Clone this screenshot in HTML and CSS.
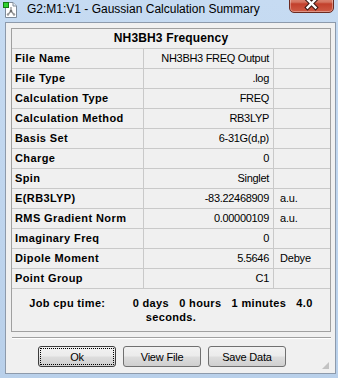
FILE: index.html
```html
<!DOCTYPE html>
<html lang="en">
<head>
  <meta charset="UTF-8" />
  <title>G2:M1:V1 - Gaussian Calculation Summary</title>
  <link rel="stylesheet" href="styles.css">
</head>
<body>
  <div class="window">
    <div class="titlebar">
      <svg class="app-icon" width="14" height="16" viewBox="0 0 14 16">
        <path d="M2.5 0.5 H10 L13.5 4 V15.5 H2.5 Z" fill="#fff" stroke="#7d8a99"/>
        <path d="M10 0.5 V4 H13.5" fill="#e8ecf1" stroke="#7d8a99"/>
        <path d="M8 5 V9 M8 9 L5 12.5 M8 9 L11 12.5" stroke="#8a8a8a" stroke-width="1.2" fill="none"/>
        <circle cx="8" cy="9" r="1.3" fill="#707070"/>
        <circle cx="5" cy="12.5" r="1.2" fill="#9a9a9a"/>
        <circle cx="11" cy="12.5" r="1.2" fill="#9a9a9a"/>
        <rect x="0.5" y="0.5" width="5" height="5" fill="#2fd12f" stroke="#137a13"/>
      </svg>
      <span class="title">G2:M1:V1 - Gaussian Calculation Summary</span>
      <div class="close">
        <svg width="45" height="20" viewBox="0 0 45 20">
          <path d="M18.5 -0.5 L26.5 7.5 M26.5 -0.5 L18.5 7.5" stroke="#3b1a14" stroke-width="4.5" stroke-linecap="square"/>
          <path d="M18.5 -0.5 L26.5 7.5 M26.5 -0.5 L18.5 7.5" stroke="#fff" stroke-width="2.4" stroke-linecap="square"/>
        </svg>
      </div>
    </div>

    <div class="client">
      <div class="summary">
        <div class="grid">
          <div class="head">NH3BH3 Frequency</div>

          <div class="label">File Name</div><div class="value">NH3BH3 FREQ Output</div><div class="unit"></div>
          <div class="label">File Type</div><div class="value">.log</div><div class="unit"></div>
          <div class="label">Calculation Type</div><div class="value">FREQ</div><div class="unit"></div>
          <div class="label">Calculation Method</div><div class="value">RB3LYP</div><div class="unit"></div>
          <div class="label">Basis Set</div><div class="value">6-31G(d,p)</div><div class="unit"></div>
          <div class="label">Charge</div><div class="value">0</div><div class="unit"></div>
          <div class="label">Spin</div><div class="value">Singlet</div><div class="unit"></div>
          <div class="label">E(RB3LYP)</div><div class="value">-83.22468909</div><div class="unit">a.u.</div>
          <div class="label">RMS Gradient Norm</div><div class="value">0.00000109</div><div class="unit">a.u.</div>
          <div class="label">Imaginary Freq</div><div class="value">0</div><div class="unit"></div>
          <div class="label">Dipole Moment</div><div class="value">5.5646</div><div class="unit">Debye</div>
          <div class="label">Point Group</div><div class="value">C1</div><div class="unit"></div>
        </div>

        <div class="cpu">
          <div class="cpu-line">Job cpu time:        0 days   0 hours   1 minutes   4.0</div>
          <div class="cpu-line">seconds.</div>
        </div>
      </div>

      <div class="separator"></div>

      <div class="buttons">
        <button class="btn default">Ok</button>
        <button class="btn">View File</button>
        <button class="btn">Save Data</button>
      </div>

      <div class="grip"></div>
    </div>
  </div>
</body>
</html>
```

FILE: styles.css
```css
* {
  margin: 0;
  padding: 0;
  box-sizing: border-box;
}

body {
  width: 338px;
  height: 378px;
  overflow: hidden;
  background-color: #bfd5ee;
  font-family: 'Liberation Sans', Arial, sans-serif;
  color: #000;
}

.window {
  height: 378px;
  display: flex;
  flex-direction: column;
  background: linear-gradient(#c6dbf2, #b9d0ea);
}

/* title bar */
.titlebar {
  height: 22px;
  flex: none;
  position: relative;
  display: flex;
  align-items: flex-start;
  padding: 2px 0 0 3px;
}

.app-icon {
  flex: none;
}

.title {
  margin-left: 10px;
  font-size: 12px;
  line-height: 14px;
  color: #000;
}

.close {
  position: absolute;
  top: -7px;
  right: 4px;
  width: 45px;
  height: 20px;
  border: 1px solid #6b2a20;
  border-radius: 0 0 5px 5px;
  background: linear-gradient(#e8a393 0%, #d47460 45%, #c2402c 55%, #cf5b45 100%);
  box-shadow: inset 0 0 0 1px rgba(255, 255, 255, 0.35);
  overflow: hidden;
}

.close svg {
  display: block;
  margin: -1px 0 0 -1px;
  transform: translateY(7px);
}

/* client area */
.client {
  flex: 1;
  position: relative;
  margin: 0 2px 4px 5px;
  border: 1px solid #8d9aab;
  background-color: #f0f0f0;
  display: flex;
  flex-direction: column;
}

.summary {
  margin: 5px 4px 0 5px;
  border: 1px solid #a0a0a0;
}

.grid {
  display: grid;
  grid-template-columns: 132px 130px 1fr;
}

.grid > div {
  height: 20px;
  line-height: 19px;
  font-size: 11px;
  border-bottom: 1px solid #c9c9c9;
  white-space: nowrap;
}

.grid .head {
  grid-column: 1 / -1;
  text-align: center;
  font-size: 12px;
  font-weight: bold;
  letter-spacing: 0.15px;
}

.label {
  padding-left: 3px;
  font-weight: bold;
  letter-spacing: 0.4px;
  border-right: 1px solid #c9c9c9;
}

.value {
  padding-right: 4px;
  text-align: right;
  letter-spacing: -0.3px;
  border-right: 1px solid #c9c9c9;
}

.unit {
  padding-left: 6px;
  letter-spacing: -0.2px;
}

.cpu {
  padding: 7px 0;
  text-align: center;
  font-size: 11px;
  line-height: 14px;
  font-weight: bold;
  letter-spacing: 0.35px;
}

.cpu-line {
  white-space: pre;
}

.separator {
  margin: 5px 4px 0 6px;
  height: 2px;
  border-top: 1px solid #a0a0a0;
  border-bottom: 1px solid #fff;
}

/* buttons */
.buttons {
  display: flex;
  gap: 7px;
  margin-top: 7px;
  padding-left: 32px;
}

.btn {
  width: 78px;
  height: 21px;
  border: 1px solid #707070;
  border-radius: 3px;
  background: linear-gradient(#f2f2f2 0%, #ebebeb 48%, #dddddd 52%, #cfcfcf 100%);
  font-family: 'Liberation Sans', Arial, sans-serif;
  font-size: 11px;
  letter-spacing: -0.2px;
  color: #000;
}

.btn.default {
  border-color: #3c3c3c;
  outline: 1px dotted #000;
  outline-offset: -3px;
}

.grip {
  position: absolute;
  right: 6px;
  bottom: 4px;
  width: 7px;
  height: 7px;
  background:
    radial-gradient(circle, #a9a9a9 0.6px, transparent 0.9px) 0 0 / 2px 2px;
  clip-path: polygon(100% 0, 100% 100%, 0 100%);
}
```
